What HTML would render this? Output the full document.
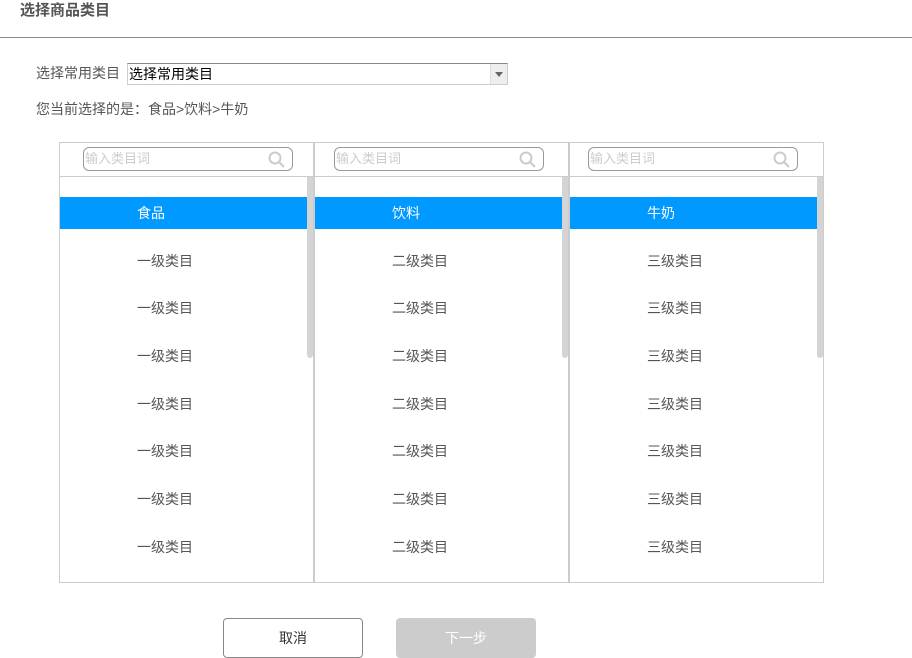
<!DOCTYPE html>
<html><head><meta charset="utf-8"><style>
*{margin:0;padding:0;box-sizing:border-box}
body{width:912px;height:658px;background:#fff;position:relative;overflow:hidden;font-family:"Liberation Sans","Noto Sans CJK SC",sans-serif;color:#555;font-size:14px}
.a{position:absolute}
.t{white-space:nowrap;line-height:16px}
.sb{position:absolute;top:147px;width:210px;height:24px;border:1px solid #999;border-radius:6px;color:#ccc;font-size:13px;line-height:22px;padding-left:1px}
.sb svg{position:absolute;right:6px;top:3px}
.col{position:absolute;top:177px;height:404px;overflow:hidden}
.it{position:absolute;left:0;width:247px;height:32px;line-height:32px;white-space:nowrap}
.sel{background:#0099ff;color:#fff}
.scr{position:absolute;top:177px;width:6px;height:181px;background:#d4d4d4;border-radius:0 0 3px 3px}
</style></head><body>
<div class="a t" style="left:20px;top:3px;font-weight:bold;font-size:15px;color:#555">选择商品类目</div>
<div class="a" style="left:0;top:37px;width:912px;height:1px;background:#888"></div>
<div class="a t" style="left:36px;top:65px">选择常用类目</div>
<div class="a" style="left:127px;top:63px;width:381px;height:22px;border:1px solid #ccc;border-top:1px solid #888;background:#fff">
<div class="a t" style="left:1px;top:2px;color:#000">选择常用类目</div>
<div class="a" style="right:0;top:0;width:17px;height:20px;background:#eee;border-left:1px solid #ddd"><div class="a" style="left:4px;top:8px;border-left:4px solid transparent;border-right:4px solid transparent;border-top:5px solid #666"></div></div>
</div>
<div class="a t" style="left:36px;top:101px">您当前选择的是：食品&gt;饮料&gt;牛奶</div>

<div class="a" style="left:59px;top:142px;width:765px;height:441px;border:1px solid #ccc"></div>
<div class="a" style="left:59px;top:176px;width:765px;height:1px;background:#ccc"></div>
<div class="a" style="left:313px;top:142px;width:2px;height:441px;background:#ccc"></div>
<div class="a" style="left:568px;top:142px;width:2px;height:441px;background:#ccc"></div>

<div class="sb" style="left:83px">输入类目词<svg width="18" height="18" viewBox="0 0 18 18"><circle cx="7" cy="7" r="5.5" fill="none" stroke="#ccc" stroke-width="2"/><path d="M11 11l5 5" stroke="#ccc" stroke-width="2.2"/></svg></div>
<div class="sb" style="left:334px">输入类目词<svg width="18" height="18" viewBox="0 0 18 18"><circle cx="7" cy="7" r="5.5" fill="none" stroke="#ccc" stroke-width="2"/><path d="M11 11l5 5" stroke="#ccc" stroke-width="2.2"/></svg></div>
<div class="sb" style="left:588px">输入类目词<svg width="18" height="18" viewBox="0 0 18 18"><circle cx="7" cy="7" r="5.5" fill="none" stroke="#ccc" stroke-width="2"/><path d="M11 11l5 5" stroke="#ccc" stroke-width="2.2"/></svg></div>

<div class="col" style="left:60px;width:247px">
<div class="it sel" style="top:20px;padding-left:77px">食品</div>
<div class="it" style="top:68px;padding-left:77px">一级类目</div>
<div class="it" style="top:115px;padding-left:77px">一级类目</div>
<div class="it" style="top:163px;padding-left:77px">一级类目</div>
<div class="it" style="top:211px;padding-left:77px">一级类目</div>
<div class="it" style="top:258px;padding-left:77px">一级类目</div>
<div class="it" style="top:306px;padding-left:77px">一级类目</div>
<div class="it" style="top:354px;padding-left:77px">一级类目</div>
</div>
<div class="scr" style="left:307px"></div>

<div class="col" style="left:315px;width:247px">
<div class="it sel" style="top:20px;padding-left:77px">饮料</div>
<div class="it" style="top:68px;padding-left:77px">二级类目</div>
<div class="it" style="top:115px;padding-left:77px">二级类目</div>
<div class="it" style="top:163px;padding-left:77px">二级类目</div>
<div class="it" style="top:211px;padding-left:77px">二级类目</div>
<div class="it" style="top:258px;padding-left:77px">二级类目</div>
<div class="it" style="top:306px;padding-left:77px">二级类目</div>
<div class="it" style="top:354px;padding-left:77px">二级类目</div>
</div>
<div class="scr" style="left:562px"></div>

<div class="col" style="left:570px;width:247px">
<div class="it sel" style="top:20px;padding-left:77px">牛奶</div>
<div class="it" style="top:68px;padding-left:77px">三级类目</div>
<div class="it" style="top:115px;padding-left:77px">三级类目</div>
<div class="it" style="top:163px;padding-left:77px">三级类目</div>
<div class="it" style="top:211px;padding-left:77px">三级类目</div>
<div class="it" style="top:258px;padding-left:77px">三级类目</div>
<div class="it" style="top:306px;padding-left:77px">三级类目</div>
<div class="it" style="top:354px;padding-left:77px">三级类目</div>
</div>
<div class="scr" style="left:817px"></div>

<div class="a" style="left:223px;top:618px;width:140px;height:40px;border:1px solid #888;border-radius:4px;text-align:center;line-height:38px;color:#333">取消</div>
<div class="a" style="left:396px;top:618px;width:140px;height:40px;background:#ccc;border-radius:4px;text-align:center;line-height:40px;color:#fff">下一步</div>
</body></html>
